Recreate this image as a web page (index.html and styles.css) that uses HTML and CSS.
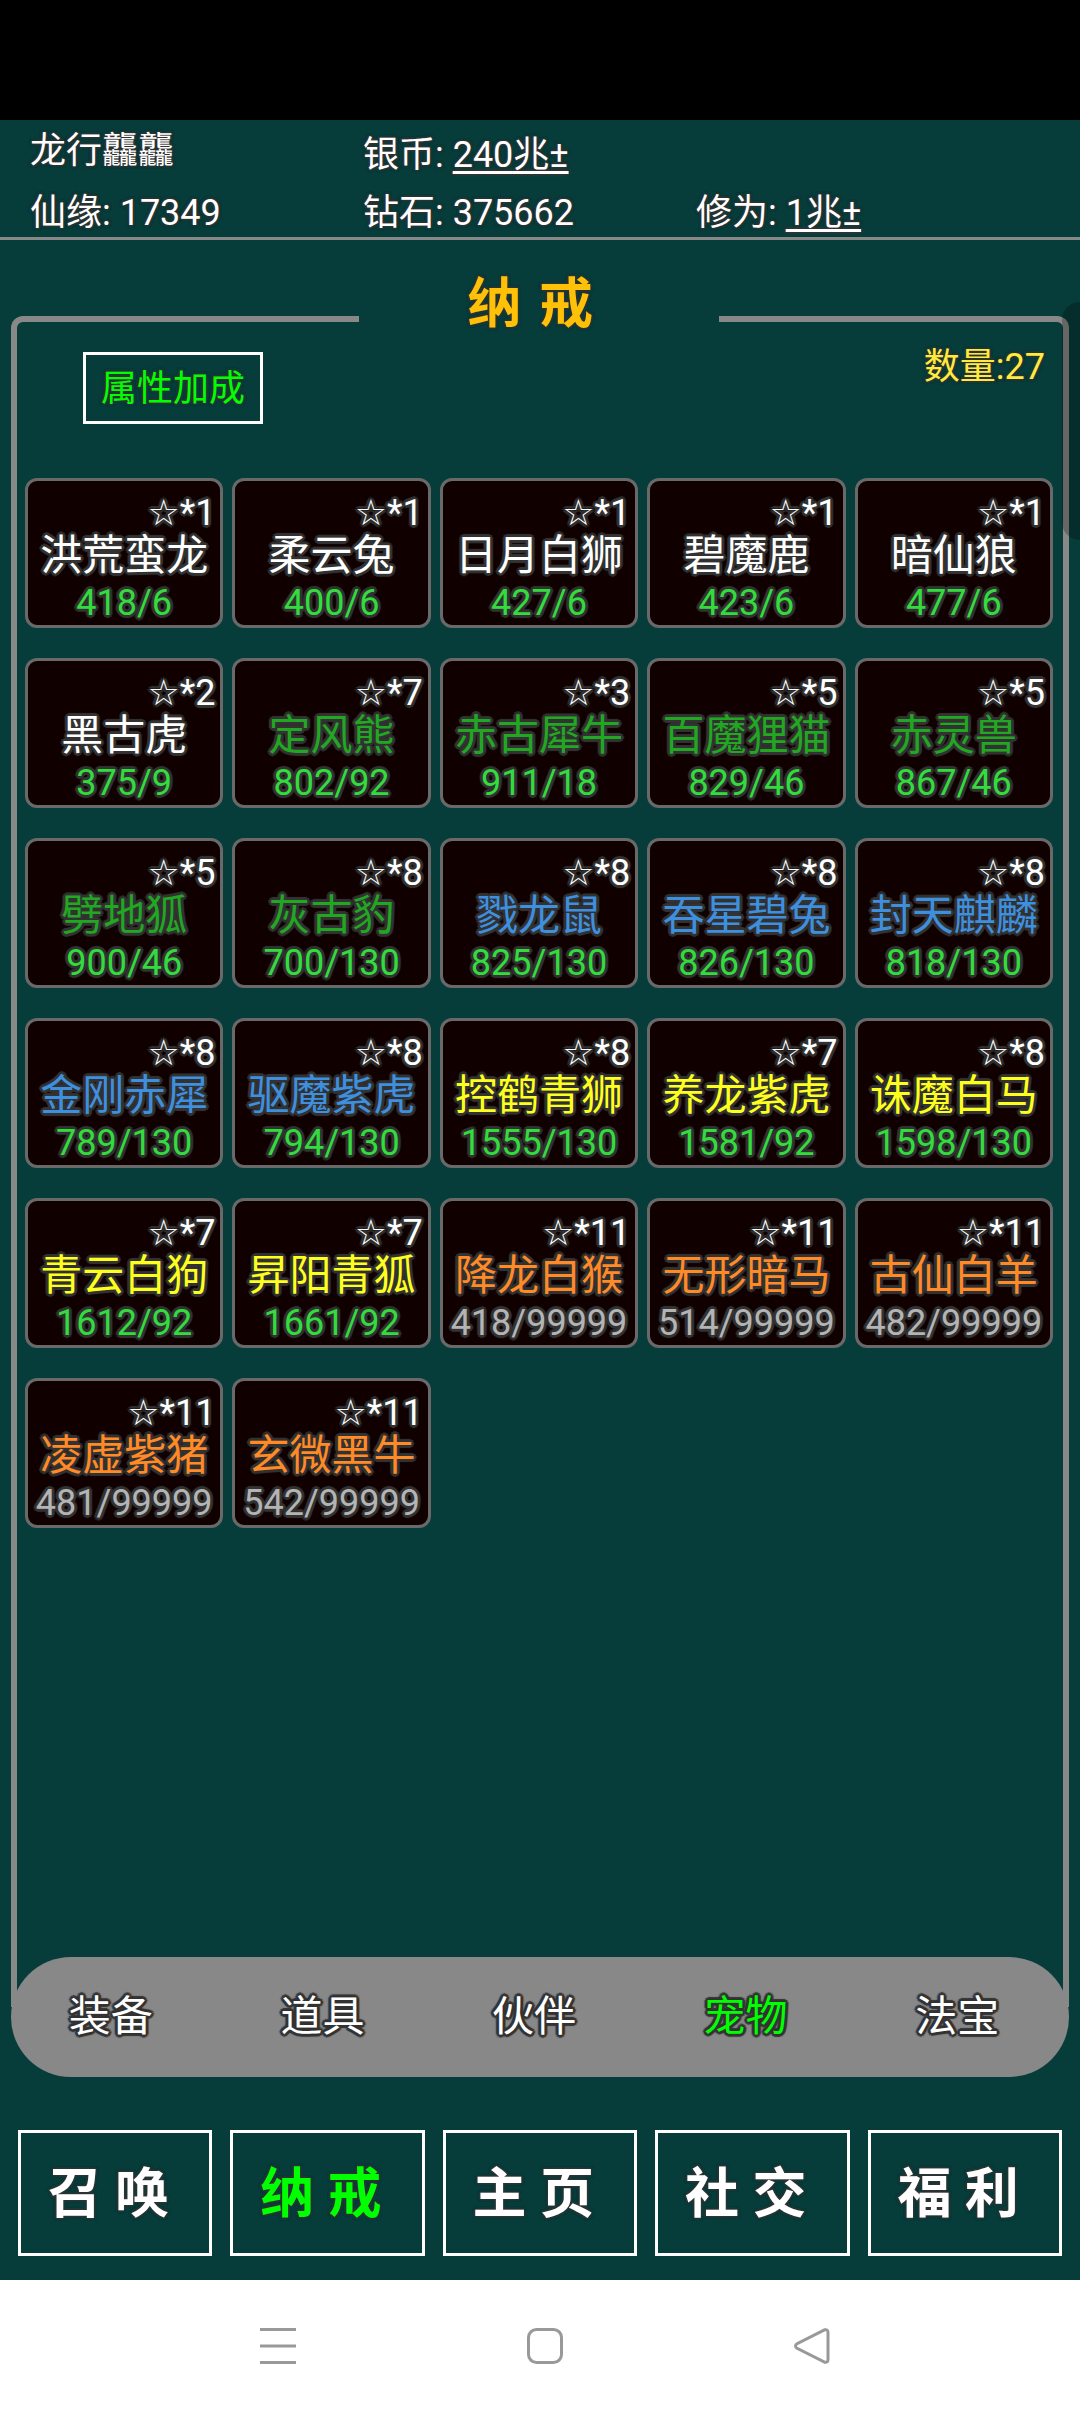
FILE: index.html
```html
<!DOCTYPE html>
<html lang="zh-CN">
<head>
    <meta charset="UTF-8">
    <meta name="viewport" content="width=device-width, initial-scale=1.0">
    <title>纳戒</title>
    <link rel="stylesheet" href="styles.css">
</head>
<body>
    <div class="status-bar"></div>

    <header class="player">
        <div>龙行龘龘</div>
        <div class="coins">银币: <a href="#coins">240兆±</a></div>
        <div></div>
        <div>仙缘: 17349</div>
        <div>钻石: 375662</div>
        <div>修为: <a href="#level">1兆±</a></div>
    </header>

    <fieldset class="bag">
        <legend>纳&nbsp;戒&nbsp;</legend>
        <div class="toolbar">
            <button class="bonus-btn">属性加成</button>
            <span class="count">数量:27</span>
        </div>

        <div class="pets">
            <button class="pet"><span class="star">☆*1</span><span class="name">洪荒蛮龙</span><span class="num">418/6</span></button>
            <button class="pet"><span class="star">☆*1</span><span class="name">柔云兔</span><span class="num">400/6</span></button>
            <button class="pet"><span class="star">☆*1</span><span class="name">日月白狮</span><span class="num">427/6</span></button>
            <button class="pet"><span class="star">☆*1</span><span class="name">碧魔鹿</span><span class="num">423/6</span></button>
            <button class="pet"><span class="star">☆*1</span><span class="name">暗仙狼</span><span class="num">477/6</span></button>

            <button class="pet"><span class="star">☆*2</span><span class="name">黑古虎</span><span class="num">375/9</span></button>
            <button class="pet green"><span class="star">☆*7</span><span class="name">定风熊</span><span class="num">802/92</span></button>
            <button class="pet green"><span class="star">☆*3</span><span class="name">赤古犀牛</span><span class="num">911/18</span></button>
            <button class="pet green"><span class="star">☆*5</span><span class="name">百魔狸猫</span><span class="num">829/46</span></button>
            <button class="pet green"><span class="star">☆*5</span><span class="name">赤灵兽</span><span class="num">867/46</span></button>

            <button class="pet green"><span class="star">☆*5</span><span class="name">劈地狐</span><span class="num">900/46</span></button>
            <button class="pet green"><span class="star">☆*8</span><span class="name">灰古豹</span><span class="num">700/130</span></button>
            <button class="pet blue"><span class="star">☆*8</span><span class="name">戮龙鼠</span><span class="num">825/130</span></button>
            <button class="pet blue"><span class="star">☆*8</span><span class="name">吞星碧兔</span><span class="num">826/130</span></button>
            <button class="pet blue"><span class="star">☆*8</span><span class="name">封天麒麟</span><span class="num">818/130</span></button>

            <button class="pet blue"><span class="star">☆*8</span><span class="name">金刚赤犀</span><span class="num">789/130</span></button>
            <button class="pet blue"><span class="star">☆*8</span><span class="name">驱魔紫虎</span><span class="num">794/130</span></button>
            <button class="pet yellow"><span class="star">☆*8</span><span class="name">控鹤青狮</span><span class="num">1555/130</span></button>
            <button class="pet yellow"><span class="star">☆*7</span><span class="name">养龙紫虎</span><span class="num">1581/92</span></button>
            <button class="pet yellow"><span class="star">☆*8</span><span class="name">诛魔白马</span><span class="num">1598/130</span></button>

            <button class="pet yellow"><span class="star">☆*7</span><span class="name">青云白狗</span><span class="num">1612/92</span></button>
            <button class="pet yellow"><span class="star">☆*7</span><span class="name">昇阳青狐</span><span class="num">1661/92</span></button>
            <button class="pet orange"><span class="star">☆*11</span><span class="name">降龙白猴</span><span class="num">418/99999</span></button>
            <button class="pet orange"><span class="star">☆*11</span><span class="name">无形暗马</span><span class="num">514/99999</span></button>
            <button class="pet orange"><span class="star">☆*11</span><span class="name">古仙白羊</span><span class="num">482/99999</span></button>

            <button class="pet orange"><span class="star">☆*11</span><span class="name">凌虚紫猪</span><span class="num">481/99999</span></button>
            <button class="pet orange"><span class="star">☆*11</span><span class="name">玄微黑牛</span><span class="num">542/99999</span></button>
        </div>
    </fieldset>

    <nav class="tabs">
        <button>装备</button>
        <button>道具</button>
        <button>伙伴</button>
        <button class="active">宠物</button>
        <button>法宝</button>
    </nav>

    <nav class="menu">
        <button>召&nbsp;唤&nbsp;</button>
        <button class="active">纳&nbsp;戒&nbsp;</button>
        <button>主&nbsp;页&nbsp;</button>
        <button>社&nbsp;交&nbsp;</button>
        <button>福&nbsp;利&nbsp;</button>
    </nav>

    <footer class="system-nav">
        <button aria-label="菜单">
            <svg width="36" height="36" viewBox="0 0 36 36"><path d="M0 1.5h36M0 18h36M0 34.5h36"/></svg>
        </button>
        <button aria-label="主屏幕">
            <svg width="36" height="36" viewBox="0 0 36 36"><rect x="1.5" y="1.5" width="33" height="33" rx="8"/></svg>
        </button>
        <button aria-label="返回">
            <svg width="36" height="36" viewBox="0 0 36 36"><path d="M30.5 1.8L2.6 16Q.4 18 2.6 20L30.5 34.2Q34 35 34 31.5V4.5Q34 1 30.5 1.8z"/></svg>
        </button>
    </footer>

    <div class="edge-handle"></div>
</body>
</html>
```
FILE: styles.css
```css
* {
    box-sizing: border-box;
}
body {
    margin: 0;
    min-height: 100vh;
    display: flex;
    flex-direction: column;
    position: relative;
    background-color: #063d3b;
    color: white;
    font-family: Roboto, "Noto Sans CJK SC", sans-serif;
    font-size: 36px;
    text-shadow: 0 0 3px #333, 0 0 3px #333, 0 0 3px #333, 0 0 3px #333;
}
button {
    margin: 0;
    padding: 0;
    border: none;
    background: none;
    color: inherit;
    font: inherit;
    text-shadow: inherit;
    cursor: pointer;
}
.status-bar {
    height: 120px;
    background-color: black;
}

/* player info */
.player {
    display: grid;
    grid-template-columns: repeat(3, 1fr);
    align-content: start;
    padding: 0 51px 0 30px;
    height: 120px;
    line-height: 62px;
    border-bottom: 3px solid #888;
}
.player a {
    color: inherit;
    text-underline-offset: 4px;
    text-decoration-thickness: 3px;
}
.player .coins {
    padding-top: 8px;
    line-height: 54px;
}

/* bag */
.bag {
    flex: 1;
    min-width: 0;
    margin: 48px 11px 0;
    padding: 2px 10px 80px 8px;
    border: 6px solid #888;
    border-bottom: none;
    border-radius: 12px 12px 0 0;
}
.bag legend {
    width: 35%;
    margin: 0 auto;
    padding: 2px 0 30px;
    color: #ffc107;
    font-size: 54px;
    font-weight: bold;
    line-height: 30px;
    letter-spacing: 2px;
    text-align: center;
}
.toolbar {
    display: flex;
    justify-content: space-between;
    align-items: flex-start;
    padding: 0 8px 0 58px;
    margin-bottom: 54px;
}
.bonus-btn {
    width: 180px;
    height: 72px;
    padding-bottom: 6px;
    border: 3px solid white;
    color: #0f0;
}
.count {
    color: #ffeb3b;
    line-height: 30px;
}
.pets {
    display: grid;
    grid-template-columns: repeat(5, 1fr);
    gap: 30px 9px;
}
.pet {
    display: flex;
    flex-direction: column;
    height: 150px;
    padding-top: 9px;
    border: 3px solid #696969;
    border-radius: 12px;
    background-color: #100000;
    text-align: center;
    white-space: nowrap;
}
.pet,
.tabs {
    text-shadow: 3px 0 1px #333, -3px 0 1px #333, 0 3px 1px #333, 0 -3px 1px #333, 2px 2px 1px #333, -2px -2px 1px #333, 2px -2px 1px #333, -2px 2px 1px #333;
}
.pet span {
    width: 100%;
}
.pet .star {
    padding-right: 5px;
    font-family: Roboto, "DejaVu Sans", sans-serif;
    line-height: 46px;
    text-align: right;
}
.pet .name {
    font-size: 42px;
    line-height: 40px;
}
.pet .num {
    line-height: 54px;
    color: #32dc3c;
}
.green .name {
    color: #22a722;
}
.blue .name {
    color: #3f8fdf;
}
.yellow .name {
    color: #ffff1e;
}
.orange .name {
    color: #ff8a26;
}
.orange .num {
    color: #b4b4b4;
}

/* category tabs */
.tabs {
    display: flex;
    margin: -50px 11px 0;
    height: 120px;
    border-radius: 60px;
    background-color: #888;
}
.tabs button {
    flex: 1;
    padding: 0 12px 10px 0;
    font-size: 42px;
}

/* main menu */
.menu {
    display: flex;
    gap: 18px;
    margin: 53px 18px 24px;
}
.menu button {
    flex: 1;
    height: 126px;
    padding-bottom: 8px;
    border: 3px solid white;
    font-size: 54px;
    font-weight: bold;
}
.tabs .active,
.menu .active {
    color: #0f0;
}

/* system buttons */
.system-nav {
    display: grid;
    grid-template-columns: repeat(3, 1fr);
    align-items: center;
    height: 132px;
    padding: 0 134px 0 144px;
    background-color: white;
}
.system-nav svg {
    display: block;
    margin: 0 auto;
    fill: none;
    stroke: #999;
    stroke-width: 3;
}
.edge-handle {
    position: absolute;
    top: 302px;
    right: 0;
    width: 18px;
    height: 238px;
    border-radius: 18px 0 0 18px;
    background-color: rgba(0, 0, 0, 0.25);
}
```
